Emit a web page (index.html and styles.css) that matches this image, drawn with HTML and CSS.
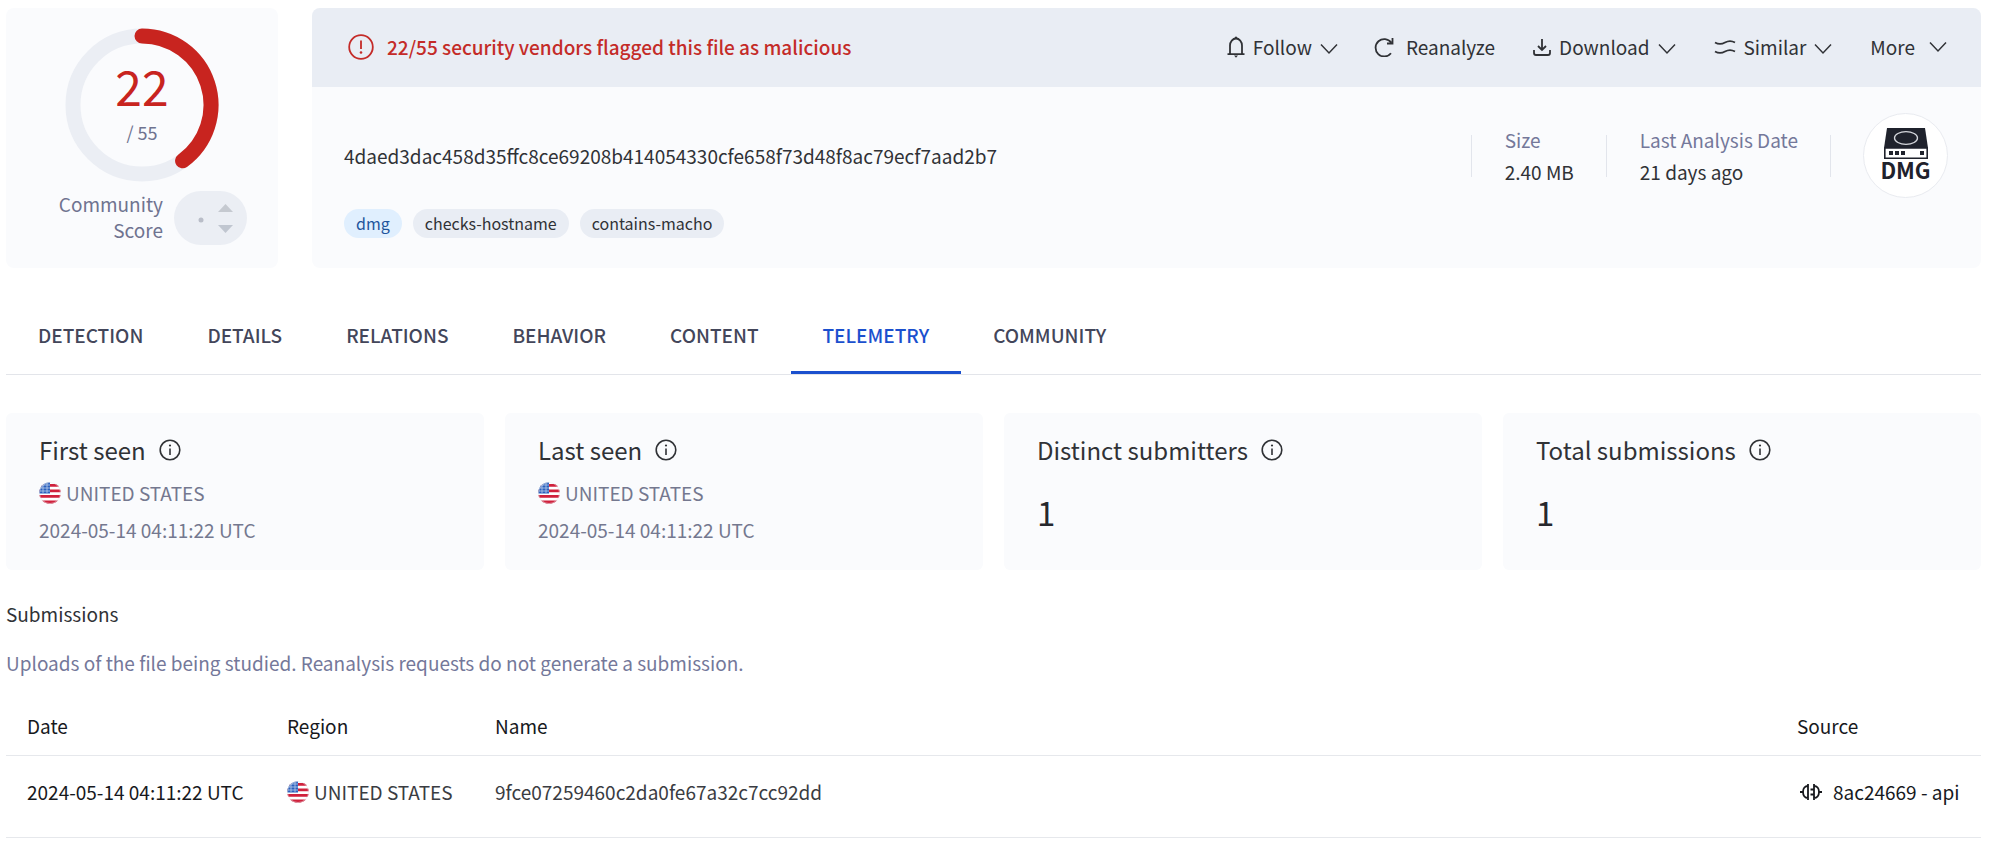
FILE: index.html
```html
<!DOCTYPE html>
<html lang="en">
<head>
<meta charset="utf-8">
<title>File report - Telemetry</title>
<link rel="stylesheet" href="styles.css">
</head>
<body>
<svg class="sprite" aria-hidden="true">
  <symbol id="chevron" viewBox="0 0 18 18"><path d="M1 4.500l8 8.500 8-8.500" fill="none" stroke="currentColor" stroke-width="1.500"/></symbol>
  <symbol id="info" viewBox="0 0 22 22"><g fill="none" stroke="currentColor" stroke-width="1.600"><circle cx="11" cy="11" r="9.800"/><path d="M11 9.500v6.500"/></g><circle cx="11" cy="6.500" r="1.100" fill="currentColor"/></symbol>
  <symbol id="flag" viewBox="0 0 22 22">
    <clipPath id="round"><circle cx="11" cy="11" r="10.800"/></clipPath>
    <g clip-path="url(#round)">
      <path fill="#fff" d="M0 0h22v22H0z"/>
      <path fill="#d0213c" d="M0 2h22v2.800H0zM0 7.600h22v2.600H0zM0 13h22v2.700H0zM0 18.500h22V22H0z"/>
      <path fill="#2a60bd" d="M0 0h11v11.500H0z"/>
      <path stroke="#b9cdec" stroke-width=".8" d="M0 3h11M0 6h11M0 9h11M4 0v11M8 0v11"/>
    </g>
    <circle cx="11" cy="11" r="10.500" fill="none" stroke="#e3e5ea" stroke-width=".5"/>
  </symbol>
</svg>
<main class="page">
  <header class="summary">
    <section class="score">
      <div class="gauge">
        <svg class="ring" viewBox="0 0 154 154" aria-hidden="true">
          <g fill="none" stroke-width="15">
            <circle cx="77" cy="77" r="69" stroke="#ebeef4"/>
            <path d="M77 8A69 69 0 0 1 117.560 132.820" stroke="#c8241f" stroke-linecap="round"/>
          </g>
        </svg>
        <div class="count"><span class="hits">22</span><span class="total">/ 55</span></div>
      </div>
      <div class="community">
        <span class="community-label">Community<br>Score</span>
        <svg class="pill" viewBox="0 0 73 54" aria-hidden="true">
          <rect width="73" height="54" rx="27" fill="#ebeef4"/>
          <circle cx="27" cy="29" r="2.500" fill="#b9bdc8"/>
          <path d="M44 21l7.500-8 7.500 8z" fill="#c5c9d0"/>
          <path d="M44 34h15l-7.500 8z" fill="#c0c6d0"/>
        </svg>
      </div>
    </section>
    <section class="file">
      <div class="banner">
        <p class="alert">
          <svg class="alert-icon" viewBox="0 0 26 26" aria-hidden="true"><g fill="none" stroke="currentColor" stroke-width="1.800"><circle cx="13" cy="13" r="11.800"/><path d="M13 6.500v8.500"/></g><circle cx="13" cy="18.500" r="1.300" fill="currentColor"/></svg>
          22/55 security vendors flagged this file as malicious
        </p>
        <div class="actions">
          <button class="action follow" type="button">
            <svg class="icon-bell" viewBox="0 0 18 22" aria-hidden="true"><path d="M3 18V9.500a6 7 0 0 1 12 0V18M.500 18.200h17" fill="none" stroke="currentColor" stroke-width="1.800"/><path d="M6.500 2.800L9 .2l2.500 2.600zM7 19.500h4L9 21.800z" fill="currentColor"/></svg>
            Follow<svg class="chev" aria-hidden="true"><use href="#chevron"/></svg></button>
          <button class="action wide" type="button">
            <svg class="icon-md" viewBox="0 0 20 20" aria-hidden="true"><path d="M17 16.300A8.700 8.700 0 1 1 17.200 5.500M18.500 1v5.500H13" fill="none" stroke="currentColor" stroke-width="1.800"/></svg>
            Reanalyze</button>
          <button class="action" type="button">
            <svg class="icon-bell" viewBox="0 0 18 22" aria-hidden="true"><path d="M9 3v11M5 10l4 4 4-4M1 14v3q0 2 2 2h12q2 0 2-2v-3" fill="none" stroke="currentColor" stroke-width="1.800"/></svg>
            Download<svg class="chev" aria-hidden="true"><use href="#chevron"/></svg></button>
          <button class="action" type="button">
            <svg class="icon-lg" viewBox="0 0 22 16" aria-hidden="true"><path d="M1 3.500q5 2.800 10 0t10 0M1 12.500q5 2.800 10 0t10 0" fill="none" stroke="currentColor" stroke-width="1.800"/></svg>
            Similar<svg class="chev" aria-hidden="true"><use href="#chevron"/></svg></button>
          <button class="action more" type="button">More<svg class="chev" aria-hidden="true"><use href="#chevron"/></svg></button>
        </div>
      </div>
      <div class="file-body">
        <div class="identity">
          <span class="hash">4daed3dac458d35ffc8ce69208b414054330cfe658f73d48f8ac79ecf7aad2b7</span>
          <dl class="meta">
            <div class="fact"><dt>Size</dt><dd>2.40 MB</dd></div>
            <div class="fact"><dt>Last Analysis Date</dt><dd>21 days ago</dd></div>
            <div class="rule"></div>
          </dl>
          <div class="filetype">
            <svg class="drive" viewBox="0 0 46 32" aria-hidden="true">
              <path d="M4 0h38l3 20H1z" fill="#1f222c"/>
              <path d="M1.800 20h42.400v10.200H1.800z" fill="#fff" stroke="#1f222c" stroke-width="1.600"/>
              <ellipse cx="23" cy="10" rx="11.500" ry="6.300" fill="none" stroke="#d5d7dc" stroke-width="1.300"/>
              <path d="M6 23h4v4H6zM12 23h4v4h-4zM18 23h4v4h-4zM37 23h4v4h-4z" fill="#1f222c"/>
            </svg>
            <span class="ext">DMG</span>
          </div>
        </div>
        <div class="tags">
          <a class="tag tag-type" href="#dmg">dmg</a>
          <a class="tag" href="#checks-hostname">checks-hostname</a>
          <a class="tag" href="#contains-macho">contains-macho</a>
        </div>
      </div>
    </section>
  </header>

  <nav class="tabs">
    <a class="tab" href="#detection">DETECTION</a>
    <a class="tab" href="#details">DETAILS</a>
    <a class="tab" href="#relations">RELATIONS</a>
    <a class="tab" href="#behavior">BEHAVIOR</a>
    <a class="tab" href="#content">CONTENT</a>
    <a class="tab active" href="#telemetry" aria-current="page">TELEMETRY</a>
    <a class="tab" href="#community">COMMUNITY</a>
  </nav>

  <section class="cards">
    <article class="card">
      <h2 class="card-title">First seen<svg class="info" aria-hidden="true"><use href="#info"/></svg></h2>
      <p class="region"><svg class="flag" aria-hidden="true"><use href="#flag"/></svg>UNITED STATES</p>
      <p class="when">2024-05-14 04:11:22 UTC</p>
    </article>
    <article class="card">
      <h2 class="card-title">Last seen<svg class="info" aria-hidden="true"><use href="#info"/></svg></h2>
      <p class="region"><svg class="flag" aria-hidden="true"><use href="#flag"/></svg>UNITED STATES</p>
      <p class="when">2024-05-14 04:11:22 UTC</p>
    </article>
    <article class="card">
      <h2 class="card-title">Distinct submitters<svg class="info" aria-hidden="true"><use href="#info"/></svg></h2>
      <p class="number">1</p>
    </article>
    <article class="card">
      <h2 class="card-title">Total submissions<svg class="info" aria-hidden="true"><use href="#info"/></svg></h2>
      <p class="number">1</p>
    </article>
  </section>

  <section class="submissions">
    <h2 class="heading">Submissions</h2>
    <p class="note">Uploads of the file being studied. Reanalysis requests do not generate a submission.</p>
    <table class="table">
      <thead><tr><th class="col-date">Date</th><th class="col-region">Region</th><th>Name</th><th class="col-source">Source</th></tr></thead>
      <tbody><tr>
        <td>2024-05-14 04:11:22 UTC</td>
        <td class="soft"><span class="region-cell"><svg class="flag" aria-hidden="true"><use href="#flag"/></svg>UNITED STATES</span></td>
        <td class="soft">9fce07259460c2da0fe67a32c7cc92dd</td>
        <td><span class="source"><svg class="plug" viewBox="0 0 22 18" aria-hidden="true"><path d="M0 9h3M8 1v16M8 3C5 3 3 5.500 3 9s2 6 5 6M14 1v16M14 3c3 0 5 2.500 5 6s-2 6-5 6M19 9h3M10.500 6.500H14M10.500 11.500H14" fill="none" stroke="currentColor" stroke-width="1.800"/></svg>8ac24669 - api</span></td>
      </tr></tbody>
    </table>
  </section>
</main>
</body>
</html>
```

FILE: styles.css
```css
* { box-sizing: border-box; }

body {
  margin: 0;
  background: #fff;
  color: #303236;
  font-family: "Noto Sans CJK SC", "Noto Sans", sans-serif;
  font-size: 19px;
  line-height: 26px;
}

h2, p, dl, dd { margin: 0; font-weight: 400; }
svg { flex: none; display: block; }
a { color: inherit; text-decoration: none; }

.sprite { position: absolute; width: 0; height: 0; }
.page { padding: 8px 18px 0 6px; }

/* Summary */
.summary { display: flex; gap: 34px; }

.score {
  width: 272px;
  flex: none;
  padding: 20px 31px 21px;
  border-radius: 8px;
  background: #fafbfd;
  color: #6f7390;
}

.gauge { display: grid; place-items: center; }
.gauge > * { grid-area: 1 / 1; }
.ring { width: 154px; height: 154px; }
.count { display: flex; flex-direction: column; align-items: center; padding-bottom: 12px; }
.hits { color: #c8241f; font-size: 48px; line-height: 66px; }
.total { font-size: 18px; line-height: 28px; }
.community { display: flex; justify-content: flex-end; gap: 11px; margin-top: 9px; }
.community-label { text-align: right; }
.pill { width: 73px; height: 54px; }

.file { flex: 1; min-width: 0; border-radius: 8px; background: #fafbfd; overflow: hidden; }

.banner {
  display: flex;
  justify-content: space-between;
  align-items: center;
  min-height: 79px;
  padding: 0 34px 2px 36px;
  background: #e9edf4;
}

.alert { display: flex; align-items: center; gap: 13px; color: #c42b28; font-weight: 500; }
.alert-icon { width: 26px; height: 26px; }
.actions { display: flex; gap: 38px; }

.action {
  display: flex;
  align-items: center;
  gap: 8px;
  padding: 0;
  border: 0;
  background: none;
  color: inherit;
  font: inherit;
  cursor: pointer;
}

.action.wide { gap: 12px; }
.action.more { gap: 14px; }
.action.follow { margin-right: -2px; }
.icon-bell { width: 18px; height: 22px; }
.icon-md { width: 20px; height: 20px; }
.icon-lg { width: 22px; height: 16px; }
.chev { width: 18px; height: 18px; margin-top: 4px; }
.more .chev { margin-top: 0; }

.file-body { padding: 26px 33px 30px 32px; }
.identity { display: flex; align-items: center; gap: 32px; min-height: 84px; }
.hash { flex: 1; }
.meta { display: flex; align-items: center; gap: 32px; line-height: 32px; }
.fact { position: relative; padding-left: 34px; }

.fact::before {
  content: "";
  position: absolute;
  left: 0;
  top: 11px;
  bottom: 11px;
  width: 1px;
  background: #e2e5ec;
}

.fact dt { color: #74789a; }
.rule { width: 1px; height: 42px; background: #e2e5ec; }

.filetype {
  display: flex;
  flex-direction: column;
  align-items: center;
  width: 85px;
  height: 85px;
  padding-top: 14px;
  border: 1px solid #e9ebf0;
  border-radius: 50%;
  background: #fff;
}

.drive { width: 46px; height: 32px; }
.ext { color: #1f222c; font-size: 22px; font-weight: 700; line-height: 18px; }

.tags { display: flex; gap: 11px; margin-top: 11px; }
.tag { padding: 0 12px; border-radius: 15px; background: #e9edf4; font-size: 16px; line-height: 29px; }
.tag-type { background: #e0effe; color: #1f559c; }

/* Tabs */
.tabs { display: flex; margin-top: 44px; border-bottom: 1px solid #e3e5ea; }
.tab { padding: 10px 32px 23px; border-bottom: 3px solid transparent; color: #43465a; font-weight: 500; }
.tab.active { border-color: #1b50ce; color: #1b50ce; }

/* Statistics */
.cards { display: grid; grid-template-columns: repeat(4, 1fr); gap: 21px; margin-top: 38px; }
.card { min-height: 157px; padding: 19px 33px 19px; border-radius: 6px; background: #fafbfd; color: #74788f; }
.card-title { display: flex; align-items: center; gap: 13px; color: #303236; font-size: 24px; line-height: 36px; }
.info { width: 22px; height: 22px; }
.region, .region-cell { display: flex; align-items: center; gap: 5px; }
.region { margin-top: 12px; }
.when { margin-top: 11px; }
.flag { width: 22px; height: 22px; }
.number { margin-top: 19px; color: #26282d; font-size: 33px; line-height: 50px; }

/* Submissions */
.submissions { padding-top: 31px; }
.heading { font-size: 19px; }
.note { margin-top: 23px; color: #74789a; }
.table { width: 100%; margin-top: 21px; border-collapse: collapse; table-layout: fixed; color: #17191d; }
.table th, .table td { padding: 16px 0 16px 21px; border-bottom: 1px solid #e6e8ec; text-align: left; font-weight: 400; }
.table td { padding: 23px 0 32px 21px; }
.table .soft { color: #3a3c42; }
.col-date { width: 260px; }
.col-region { width: 208px; }
.col-source { width: 205px; }
.source { display: flex; align-items: center; gap: 11px; padding-left: 3px; }
.plug { width: 22px; height: 18px; }
```
